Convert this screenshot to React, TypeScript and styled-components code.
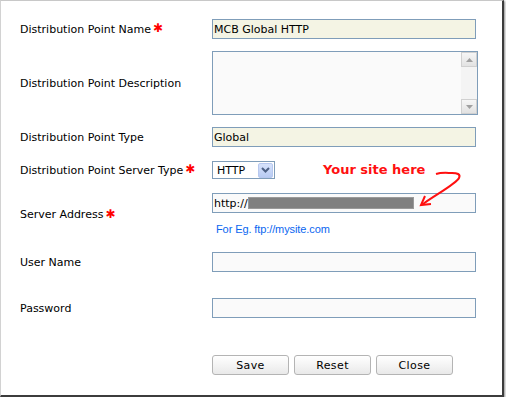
import React from "react";
import styled, { createGlobalStyle } from "styled-components";

const GlobalStyle = createGlobalStyle`
  html, body {
    margin: 0;
    padding: 0;
    background: #ffffff;
  }
  * {
    box-sizing: border-box;
  }
`;

const Panel = styled.div`
  position: relative;
  width: 504px;
  height: 397px;
  background: #ffffff;
  border-top: 1px solid #c8c8c8;
  border-left: 1px solid #d2d2d2;
  border-right: 2px solid #3c3c3c;
  border-bottom: 2px solid #3c3c3c;
  box-shadow: 1px 1px 2px rgba(0, 0, 0, 0.45);
`;

const Form = styled.div`
  display: flex;
  flex-direction: column;
  padding: 18px 0 0 19px;
`;

const Row = styled.div<{ $mt?: number }>`
  display: grid;
  grid-template-columns: 192px 1fr;
  align-items: center;
  margin-top: ${(p) => p.$mt ?? 0}px;
`;

const Label = styled.div`
  font-family: "DejaVu Sans", Verdana, sans-serif;
  font-size: 11px;
  color: #000;
  white-space: nowrap;
  display: flex;
  align-items: center;
`;

const Required = styled.span`
  color: #ff0000;
  font-size: 12px;
  font-weight: bold;
  margin-left: 2px;
  position: relative;
  top: -1px;
`;

const TextBox = styled.div<{ $beige?: boolean }>`
  width: 264px;
  height: 20px;
  border: 1px solid #7f9db9;
  background: ${(p) => (p.$beige ? "#f4f4e4" : "#fafafa")};
  font-family: "DejaVu Sans", Verdana, sans-serif;
  font-size: 11px;
  color: #000;
  padding: 0 1px;
  display: flex;
  align-items: center;
  white-space: nowrap;
`;

const TextArea = styled.div`
  width: 266px;
  height: 64px;
  border: 1px solid #7f9db9;
  background: #fafafa;
  display: flex;
  justify-content: flex-end;
`;

const ScrollBar = styled.div`
  width: 16px;
  display: flex;
  flex-direction: column;
  justify-content: space-between;
  background: #f4f4f4;
`;

const ScrollButton = styled.div`
  height: 15px;
  border: 1px solid #d0d0d0;
  background: linear-gradient(#f6f6f6, #e2e2e2);
  display: flex;
  align-items: center;
  justify-content: center;
`;

const Select = styled.div`
  width: 63px;
  height: 18px;
  border: 1px solid #7f9db9;
  background: #ffffff;
  display: flex;
  align-items: center;
  justify-content: space-between;
  padding: 0 1px 0 4px;
  font-family: "DejaVu Sans", Verdana, sans-serif;
  font-size: 11px;
  color: #000;
`;

const SelectButton = styled.div`
  width: 15px;
  height: 15px;
  border-radius: 2px;
  border: 1px solid #b7c8ef;
  background: linear-gradient(#d6e2fb, #b8cbf3);
  display: flex;
  align-items: center;
  justify-content: center;
`;

const AddressBlock = styled.div`
  display: flex;
  flex-direction: column;
`;

const Redacted = styled.span`
  display: inline-block;
  width: 166px;
  height: 12px;
  background: #808080;
  border: 1px solid #9a9a9a;
`;

const Hint = styled.div`
  margin-top: 9px;
  padding-left: 4px;
  height: 14px;
  line-height: 14px;
  font-family: "Liberation Sans", Arial, sans-serif;
  font-size: 11px;
  letter-spacing: -0.1px;
  color: #0a66f0;
`;

const Buttons = styled.div`
  display: flex;
  gap: 5px;
`;

const Button = styled.div`
  width: 77px;
  height: 20px;
  border: 1px solid #b4b4b4;
  border-radius: 3px;
  background: linear-gradient(#ffffff, #e9e9e9);
  display: flex;
  align-items: center;
  justify-content: center;
  font-family: "DejaVu Sans", Verdana, sans-serif;
  font-size: 11px;
  letter-spacing: 0.4px;
  color: #000;
`;

const Note = styled.div`
  position: absolute;
  left: 322px;
  top: 161px;
  font-family: "DejaVu Sans", Verdana, sans-serif;
  font-weight: bold;
  font-size: 13px;
  color: #ff1010;
  white-space: nowrap;
`;

const Arrow = styled.svg`
  position: absolute;
  left: 414px;
  top: 162px;
`;

const Star = () => <Required>✱</Required>;

const Triangle = ({ up }: { up?: boolean }) => (
  <svg width="7" height="4" viewBox="0 0 7 4">
    <path d={up ? "M0 4 L3.5 0 L7 4 Z" : "M0 0 L3.5 4 L7 0 Z"} fill="#a0a0a0" />
  </svg>
);

export default function App() {
  return (
    <>
      <GlobalStyle />
      <Panel>
        <Form>
          <Row>
            <Label>
              Distribution Point Name
              <Star />
            </Label>
            <TextBox $beige>MCB Global HTTP</TextBox>
          </Row>
          <Row $mt={12}>
            <Label>Distribution Point Description</Label>
            <TextArea>
              <ScrollBar>
                <ScrollButton>
                  <Triangle up />
                </ScrollButton>
                <ScrollButton>
                  <Triangle />
                </ScrollButton>
              </ScrollBar>
            </TextArea>
          </Row>
          <Row $mt={12}>
            <Label>Distribution Point Type</Label>
            <TextBox $beige>Global</TextBox>
          </Row>
          <Row $mt={14}>
            <Label>
              Distribution Point Server Type
              <Star />
            </Label>
            <Select>
              HTTP
              <SelectButton>
                <svg width="9" height="6" viewBox="0 0 9 6">
                  <path d="M1 1 L4.5 4.5 L8 1" stroke="#4d6185" strokeWidth="2" fill="none" />
                </svg>
              </SelectButton>
            </Select>
          </Row>
          <Row $mt={14}>
            <Label>
              Server Address
              <Star />
            </Label>
            <AddressBlock>
              <TextBox>
                http://
                <Redacted />
              </TextBox>
              <Hint>For Eg. ftp://mysite.com</Hint>
            </AddressBlock>
          </Row>
          <Row $mt={16}>
            <Label>User Name</Label>
            <TextBox />
          </Row>
          <Row $mt={26}>
            <Label>Password</Label>
            <TextBox />
          </Row>
          <Row $mt={37}>
            <span />
            <Buttons>
              <Button>Save</Button>
              <Button>Reset</Button>
              <Button>Close</Button>
            </Buttons>
          </Row>
        </Form>
        <Note>Your site here</Note>
        <Arrow width="50" height="46" viewBox="0 0 50 46">
          <path
            d="M21 11 C27 9, 33 10, 37 10 C42 10, 46 11, 44 15 C41 21, 20 32, 8 41"
            stroke="#ff1010"
            strokeWidth="2"
            fill="none"
          />
          <path d="M10 33 L6 42 L16 41" stroke="#ff1010" strokeWidth="2" fill="none" />
        </Arrow>
      </Panel>
    </>
  );
}
